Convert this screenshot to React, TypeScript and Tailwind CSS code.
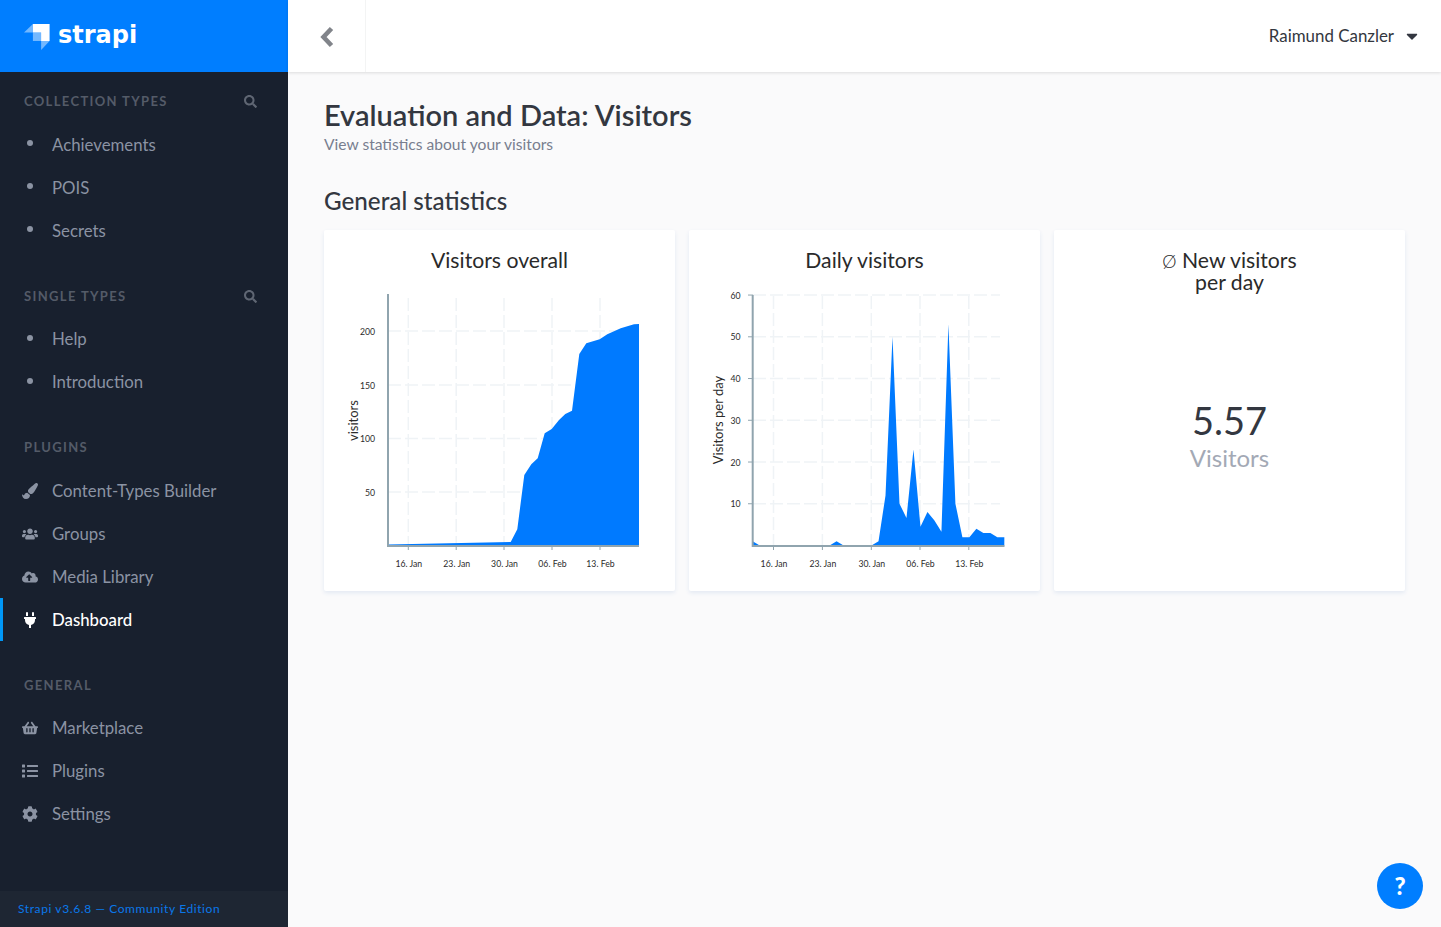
import type { ComponentType, ReactNode } from "react";
import {
  FaCaretDown,
  FaCloudUploadAlt,
  FaCog,
  FaList,
  FaPaintBrush,
  FaPlug,
  FaSearch,
  FaShoppingBasket,
  FaUsers,
} from "react-icons/fa";

type NavItem = { label: string; icon?: ComponentType<{ className?: string }>; active?: boolean };

const SECTIONS: { title: string; search?: boolean; items: NavItem[] }[] = [
  {
    title: "Collection Types",
    search: true,
    items: [{ label: "Achievements" }, { label: "POIS" }, { label: "Secrets" }],
  },
  {
    title: "Single Types",
    search: true,
    items: [{ label: "Help" }, { label: "Introduction" }],
  },
  {
    title: "Plugins",
    items: [
      { label: "Content-Types Builder", icon: FaPaintBrush },
      { label: "Groups", icon: FaUsers },
      { label: "Media Library", icon: FaCloudUploadAlt },
      { label: "Dashboard", icon: FaPlug, active: true },
    ],
  },
  {
    title: "General",
    items: [
      { label: "Marketplace", icon: FaShoppingBasket },
      { label: "Plugins", icon: FaList },
      { label: "Settings", icon: FaCog },
    ],
  },
];

// coordinates below are page pixels, the svg viewBox starts at the card's chart area
const OVERALL_AREA = [
  [388, 544.5], [510.7, 542], [517.3, 529.3], [524.3, 475], [531.3, 464.3], [537.7, 458.3],
  [544.7, 433.3], [551.7, 429], [559, 420], [565.3, 414], [572, 410.7], [579.3, 354],
  [586.3, 343.3], [599.7, 339.3], [607.3, 334.3], [620.7, 328.3], [634, 324.3], [639, 324],
];

const DAILY_VALUES = [
  1, 0, 0, 0, 0, 0, 0, 0, 0, 0, 0, 0, 1, 0, 0, 0, 0, 0, 1, 12, 50, 10, 6.6, 23, 4.5, 8, 6, 3.3,
  53, 10, 2, 2, 4, 3, 3, 2, 2,
];

const DATES = ["16. Jan", "23. Jan", "30. Jan", "06. Feb", "13. Feb"];

const Logo = () => (
  <div className="flex items-center">
    <svg width="26" height="26" viewBox="0 0 25.4 25.4" className="mr-[8px] mt-[1px]">
      <path d="M8.7 0H25v16.6h-8.3V8.3h-8z" fill="#ffffff" />
      <path d="M8.7 0v8.3H0z" fill="#ffffff" fillOpacity="0.45" />
      <path d="M8.7 8.3h8v8.3h-8z" fill="#ffffff" fillOpacity="0.45" />
      <path d="M16.7 16.6H25l-8.3 8.8z" fill="#ffffff" fillOpacity="0.45" />
    </svg>
    <span className="-mt-[2px] font-['DejaVu_Sans',sans-serif] text-[24px] leading-none font-bold text-white">
      strapi
    </span>
  </div>
);

const Sidebar = () => (
  <aside className="flex h-[927px] w-[288px] shrink-0 flex-col bg-[#18202e]">
    <div className="flex h-[72px] shrink-0 items-center bg-[#007eff] pl-[24px]">
      <Logo />
    </div>
    <nav className="flex-1 pt-[8px]">
      {SECTIONS.map((section) => (
        <div key={section.title} className="mb-[22.5px]">
          <div className="flex h-[43px] items-center justify-between pr-[31px] pl-[24px]">
            <h3 className="pt-[0.5px] text-[13px] font-bold tracking-[1.35px] text-[#545b68] uppercase">
              {section.title}
            </h3>
            {section.search && <FaSearch className="text-[13px] text-[#5f6673]" />}
          </div>
          {section.items.map((item) => (
            <a
              key={item.label}
              className={`relative flex h-[43px] items-center text-[16.8px] ${
                item.active ? "font-medium text-white" : "text-[#8b93a3]"
              }`}
            >
              {item.active && <span className="absolute top-0 left-0 h-full w-[3px] bg-[#0097f7]" />}
              <span className="flex w-[52px] shrink-0 justify-center pr-[8px] pl-[16px]">
                {item.icon ? (
                  <item.icon className={`text-[16px] ${item.active ? "text-white" : "text-[#8b93a3]"}`} />
                ) : (
                  <span className="mb-[3px] h-[6px] w-[6px] rounded-full bg-[#8b93a3]" />
                )}
              </span>
              {item.label}
            </a>
          ))}
        </div>
      ))}
    </nav>
    <div className="flex h-[36px] shrink-0 items-center bg-[#1e2633] pl-[18px] text-[12px] tracking-[0.6px] text-[#0a78ea]">
      Strapi v3.6.8 — Community Edition
    </div>
  </aside>
);

const Grid = ({ xs, ys, x1, x2, y1, y2 }: { xs: number[]; ys: number[]; x1: number; x2: number; y1: number; y2: number }) => (
  <g stroke="#eff3f6" strokeWidth="1.5" strokeDasharray="13 4">
    {xs.map((x) => (
      <line key={x} x1={x} x2={x} y1={y1} y2={y2} />
    ))}
    {ys.map((y) => (
      <line key={y} x1={x1} x2={x2} y1={y} y2={y} />
    ))}
  </g>
);

const ChartText = ({ x, y, anchor = "middle", children }: { x: number; y: number; anchor?: "middle" | "end"; children: ReactNode }) => (
  <text x={x} y={y} textAnchor={anchor} fontSize="8.7" fill="#2b2b2b" fontFamily="Lato, sans-serif">
    {children}
  </text>
);

const OverallChart = () => {
  const xs = [408.3, 456.2, 504, 552, 600];
  const ticks: [number, number][] = [[200, 331], [150, 385], [100, 438.5], [50, 492]];
  const area = OVERALL_AREA.map((p) => p.join(",")).join(" ");
  return (
    <svg width="351" height="310" viewBox="324 280 351 310">
      <Grid xs={xs} ys={ticks.map((t) => t[1])} x1={388} x2={639} y1={298} y2={545} />
      <polygon points={`388,545.5 ${area} 639,545.5`} fill="#007aff" />
      <path d="M388 294V546H639" fill="none" stroke="#90a4ae" strokeWidth="2" />
      {xs.map((x) => (
        <line key={x} x1={x} x2={x} y1={545} y2={550} stroke="#90a4ae" />
      ))}
      {ticks.map(([v, y]) => (
        <ChartText key={v} x={375} y={y + 3.5} anchor="end">
          {v}
        </ChartText>
      ))}
      {xs.map((x, i) => (
        <ChartText key={x} x={x + 0.5} y={567}>
          {DATES[i]}
        </ChartText>
      ))}
      <text x={0} y={0} transform="translate(357.5 420.5) rotate(-90)" textAnchor="middle" fontSize="13" fill="#2b2b2b" fontFamily="Lato, sans-serif">
        visitors
      </text>
    </svg>
  );
};

const DailyChart = () => {
  const xs = [773.5, 822.4, 871.3, 920, 968.8];
  const base = 545.5;
  const ticks = [60, 50, 40, 30, 20, 10].map((v) => [v, base - v * 4.174]);
  const points = DAILY_VALUES.map((v, i) => `${752.7 + i * 6.99},${base - v * 4.174}`).join(" ");
  return (
    <svg width="351" height="310" viewBox="689 280 351 310">
      <Grid xs={xs} ys={ticks.map((t) => t[1])} x1={753} x2={1000} y1={296} y2={545} />
      <polygon points={`752.7,${base} ${points} 1004.3,${base}`} fill="#007aff" />
      <path d="M752.7 295V546H1004.5" fill="none" stroke="#90a4ae" strokeWidth="2" />
      {ticks.map(([v, y]) => (
        <line key={v} x1={748} x2={753} y1={y} y2={y} stroke="#90a4ae" />
      ))}
      {xs.map((x) => (
        <line key={x} x1={x} x2={x} y1={545} y2={550} stroke="#90a4ae" />
      ))}
      {ticks.map(([v, y]) => (
        <ChartText key={v} x={740.5} y={y + 3.5} anchor="end">
          {v}
        </ChartText>
      ))}
      {xs.map((x, i) => (
        <ChartText key={x} x={x + 0.5} y={567}>
          {DATES[i]}
        </ChartText>
      ))}
      <text x={0} y={0} transform="translate(722.5 420) rotate(-90)" textAnchor="middle" fontSize="13" fill="#2b2b2b" fontFamily="Lato, sans-serif">
        Visitors per day
      </text>
    </svg>
  );
};

const Card = ({ title, children }: { title: ReactNode; children: ReactNode }) => (
  <section className="h-[361px] rounded-[2px] bg-white shadow-[0_2px_4px_0_#e3e9f3]">
    <h3 className="h-[50px] pt-[19px] text-center text-[21.2px] leading-[22px] font-normal text-[#2a2a2a]">
      {title}
    </h3>
    {children}
  </section>
);

export default function App() {
  return (
    <div className="relative flex h-[927px] overflow-hidden bg-[#fafafb] font-['Lato',sans-serif]">
      <Sidebar />
      <div className="min-w-0 flex-1">
        <header className="flex h-[72px] items-center justify-between bg-white pr-[23px] shadow-[0_1px_3px_0_rgba(0,0,0,0.12)]">
          <button
            type="button"
            className="flex h-[72px] w-[78px] items-center justify-center border-r border-[#f3f4f4]"
          >
            <svg width="16" height="22" viewBox="0 0 16 22" fill="none" className="mt-[1px]">
              <path d="M12.5 2.5 4.5 11l8 8.5" stroke="#81848a" strokeWidth="4.6" />
            </svg>
          </button>
          <div className="-mr-[3px] flex items-center gap-[9px] text-[16.9px] text-[#333740]">
            Raimund Canzler
            <FaCaretDown className="text-[18px]" />
          </div>
        </header>

        <main className="px-[36px]">
          <h1 className="mt-[24px] text-[29px] leading-[38px] font-semibold text-[#333740]">
            Evaluation and Data: Visitors
          </h1>
          <p className="text-[15.6px] leading-[20px] text-[#787e8f]">View statistics about your visitors</p>
          <h2 className="mt-[31px] mb-[13px] text-[24.2px] leading-[32px] font-medium text-[#333740]">
            General statistics
          </h2>
          <div className="grid grid-cols-3 gap-[14px]">
            <Card title="Visitors overall">
              <OverallChart />
            </Card>
            <Card title="Daily visitors">
              <DailyChart />
            </Card>
            <Card
              title={
                <>
                  <span className="text-[18px] leading-none font-light">Ø</span> New visitors
                  <br />
                  per day
                </>
              }
            >
              <div className="flex flex-col items-center pt-[117px]">
                <span className="text-[38px] leading-[46px] text-[#333740]">5.57</span>
                <span className="text-[24px] leading-[30px] text-[#a3a9b5]">Visitors</span>
              </div>
            </Card>
          </div>
        </main>
      </div>
      <button
        type="button"
        className="absolute right-[18px] bottom-[18px] flex h-[46px] w-[46px] items-center justify-center rounded-full bg-[#007eff] text-[24px] font-black text-white"
      >
        ?
      </button>
    </div>
  );
}
